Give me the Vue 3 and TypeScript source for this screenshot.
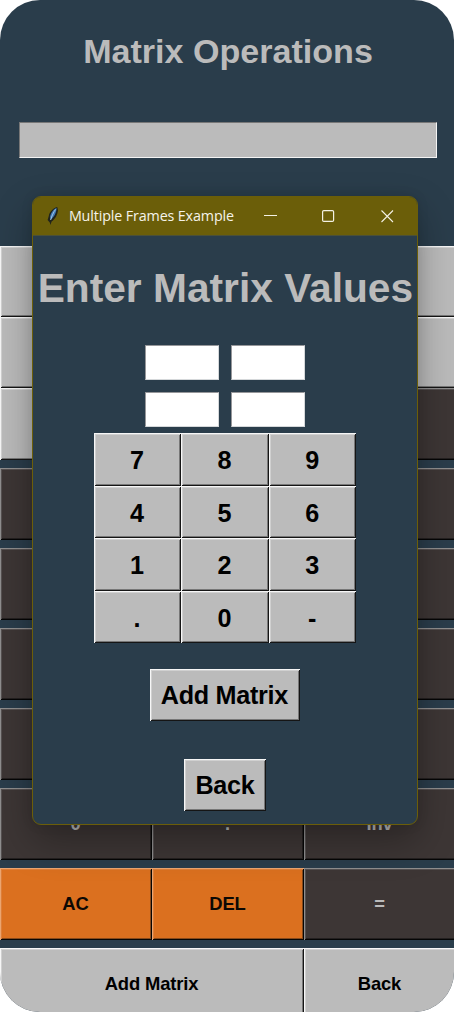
<script setup lang="ts">
interface Key {
  label: string
  tone: 'light' | 'dark' | 'orange'
}

const light = (label: string): Key => ({ label, tone: 'light' })
const dark = (label: string): Key => ({ label, tone: 'dark' })
const orange = (label: string): Key => ({ label, tone: 'orange' })

const topRows: Key[][] = [
  [light(''), light(''), light('')],
  [light(''), light(''), light('')],
  [light(''), light(''), dark('')],
]

const rows: Key[][] = [
  [dark(''), dark(''), dark('')],
  [dark(''), dark(''), dark('')],
  [dark(''), dark(''), dark('')],
  [dark(''), dark(''), dark('')],
  [dark('0'), dark('.'), dark('Inv')],
  [orange('AC'), orange('DEL'), dark('=')],
]

const pad: string[] = ['7', '8', '9', '4', '5', '6', '1', '2', '3', '.', '0', '-']
</script>

<template>
  <main class="app">
    <h1 class="app-title">Matrix Operations</h1>
    <div class="display"></div>
    <section class="keys">
      <div class="top-block">
        <div v-for="(row, r) in topRows" :key="r" class="row">
          <div v-for="(k, i) in row" :key="i" class="key" :class="k.tone">{{ k.label }}</div>
        </div>
      </div>
      <div v-for="(row, r) in rows" :key="r" class="row">
        <div v-for="(k, i) in row" :key="i" class="key" :class="k.tone">{{ k.label }}</div>
      </div>
      <div class="row">
        <div class="key light wide">Add Matrix</div>
        <div class="key light">Back</div>
      </div>
    </section>

    <section class="window">
      <header class="bar">
        <svg class="feather" width="14" height="20" viewBox="0 0 14 20">
          <path d="M11.2 1 C7 2 3.4 6 2.8 10 L1.6 14 L3.8 16.5 L4.5 19 L5.6 15.5 C8.8 13.5 11.6 9 12 4 Z" fill="#20231c" />
          <path d="M10.6 2 C7.5 3.2 4.6 7 4 11 L4.6 13.6 C7.8 11.5 10.4 7 10.6 2 Z" fill="#3f79b8" />
          <path d="M9.6 3.4 C7.5 6 5.8 10 4.6 14" fill="none" stroke="#a5c8e6" stroke-width="1" />
        </svg>
        <span class="bar-text">Multiple Frames Example</span>
        <svg class="controls" width="136" height="16" viewBox="0 0 136 16" fill="none" stroke="#f3f1e4">
          <path d="M1 7.5H14" stroke-width="1" />
          <rect x="59.6" y="2.6" width="11" height="10.8" rx="1.2" stroke-width="1.2" />
          <path d="M118.5 2.5L130 14M130 2.5L118.5 14" stroke-width="1.1" />
        </svg>
      </header>
      <div class="body">
        <h2 class="heading">Enter Matrix Values</h2>
        <div class="entries">
          <div v-for="n in 4" :key="n" class="entry"></div>
        </div>
        <div class="pad">
          <div v-for="p in pad" :key="p" class="key light">{{ p }}</div>
        </div>
        <div class="key light add">Add Matrix</div>
        <div class="key light back">Back</div>
      </div>
    </section>
  </main>
</template>

<style>
html,
body {
  background: #fff;
  overflow: hidden;
}
</style>

<style scoped>
.app {
  position: relative;
  width: 454px;
  height: 1012px;
  background: #2a3d4b;
  border-radius: 40px;
  overflow: hidden;
  font-family: 'Liberation Sans', Arial, sans-serif;
  font-weight: 700;
}
.app-title {
  margin: 0;
  padding: 31px 0 0 2px;
  height: 91px;
  box-sizing: content-box;
  text-align: center;
  font-size: 34.1px;
  line-height: 40px;
  color: #bbb;
}
.display {
  height: 36px;
  margin: 0 17px 0 19px;
  box-sizing: border-box;
  background: #bbb;
  border: 1px solid;
  border-color: #777 #f4f4f4 #f4f4f4 #777;
}
.keys {
  margin-top: 88px;
  width: 456px;
  display: flex;
  flex-direction: column;
  gap: 8px;
}
.top-block {
  height: 214px;
  display: grid;
  grid-template-rows: 71px 71px 72px;
}
.row {
  display: grid;
  grid-template-columns: repeat(3, 152px);
}
.keys > .row {
  height: 72px;
}
.key {
  display: flex;
  align-items: center;
  justify-content: center;
  box-sizing: border-box;
  font-size: 18.4px;
  letter-spacing: -0.15px;
  line-height: 1;
  white-space: nowrap;
  padding: 0 1px 0 0;
}
.wide {
  grid-column: span 2;
}
.light {
  background: #bbb;
  color: #000;
  box-shadow: inset 1px 1px #f6f6f6, inset -1px -1px #151515, inset 2px 2px #d0d0d0, inset -2px -2px #777;
}
.dark {
  background: #3d3635;
  color: #bbb;
  box-shadow: inset 1px 1px #8f8e8e, inset -1px -1px #050505, inset 2px 2px #555050, inset -2px -2px #242020;
}
.orange {
  background: #db701f;
  color: #0c0804;
  box-shadow: inset 1px 1px #eba570, inset -1px -1px #080604, inset 2px 2px #dd7e38, inset -2px -2px #87491a;
}
.window {
  position: absolute;
  left: 32.4px;
  top: 196px;
  width: 386px;
  height: 629px;
  box-sizing: border-box;
  border: 1px solid #6b5e09;
  border-radius: 9px;
  background: #2a3d4b;
  overflow: hidden;
  box-shadow: 0 16px 38px rgba(0, 0, 0, 0.3), 0 0 12px rgba(0, 0, 0, 0.1);
}
.bar {
  height: 39px;
  display: flex;
  align-items: center;
  background: #6b5e09;
  box-sizing: border-box;
  padding-left: 13px;
  border-bottom: 1px solid #4b5038;
}
.feather {
  margin-top: -1px;
}
.bar-text {
  margin-left: 8.5px;
  width: 165px;
  font-family: 'Open Sans', 'Noto Sans', sans-serif;
  font-size: 14.3px;
  letter-spacing: -0.13px;
  font-weight: 400;
  line-height: 20px;
  color: #f5f3e9;
  white-space: nowrap;
}
.controls {
  margin-left: 29.5px;
  flex: none;
}
.body {
  display: flex;
  flex-direction: column;
  align-items: center;
}
.heading {
  margin: 29px 0 0;
  font-size: 40.7px;
  line-height: 46px;
  color: #bbb;
  white-space: nowrap;
}
.entries {
  margin: 34px 0 0;
  display: grid;
  grid-template-columns: 74px 74px;
  grid-template-rows: 35px 35px;
  gap: 12.4px 12px;
}
.entry {
  background: #fff;
  border: 1px solid;
  border-color: #96979a #d5d8da #d5d8da #96979a;
}
.pad {
  margin: 6px 1px 0 0;
  display: grid;
  grid-template-columns: repeat(3, 87.6px);
  grid-template-rows: repeat(4, 52.5px);
}
.body .key {
  font-size: 25.2px;
  letter-spacing: -0.3px;
  padding: 2px 1px 0 0;
}
.body .add {
  margin: 25.6px 1px 0 0;
  width: 150px;
  height: 52px;
  padding-top: 1px;
}
.body .back {
  margin: 38px 0 0;
  width: 82px;
  height: 52px;
  padding-top: 1px;
}
</style>
